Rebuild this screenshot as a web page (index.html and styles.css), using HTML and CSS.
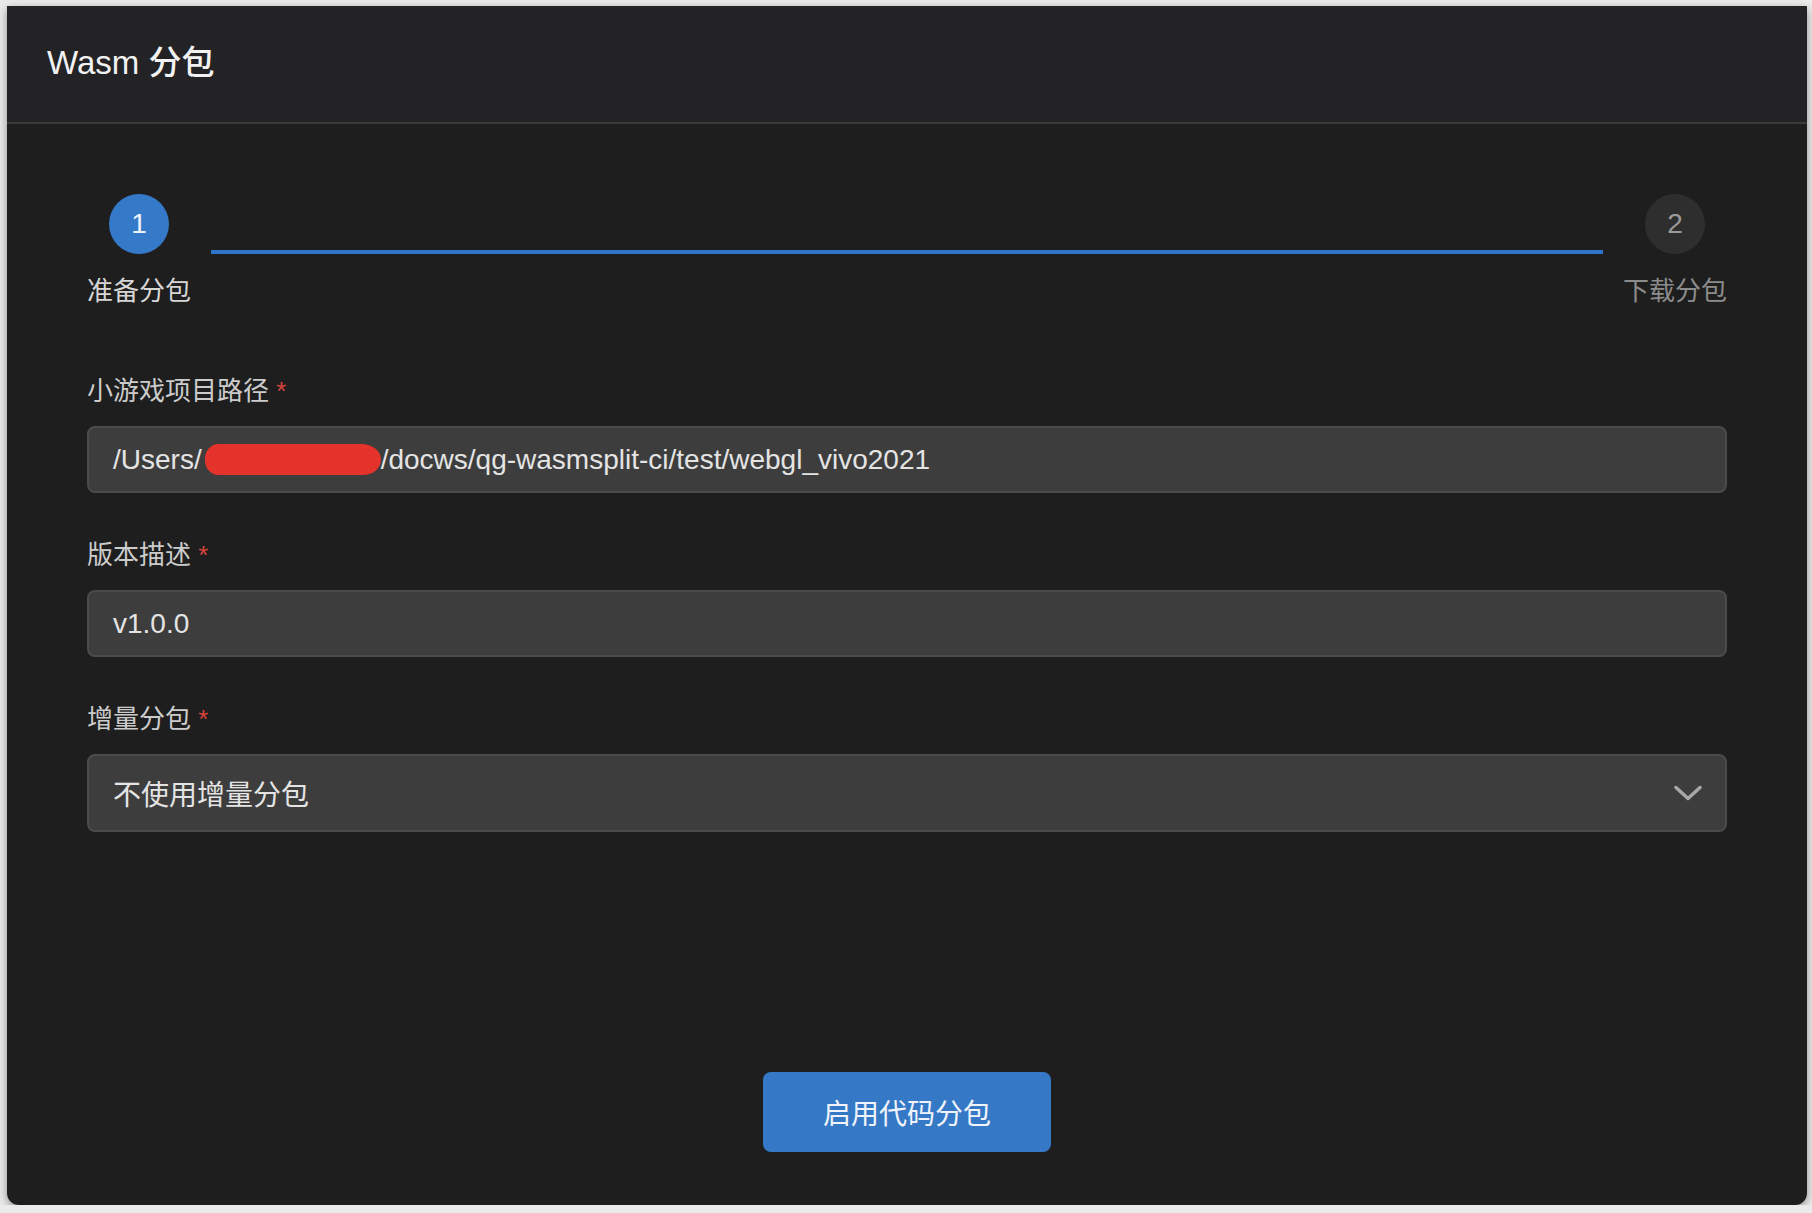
FILE: index.html
```html
<!DOCTYPE html>
<html>
<head>
  <meta charset="utf-8">
  <title>Wasm 分包</title>
  <link rel="stylesheet" href="styles.css">
</head>
<body>
  <div class="window">
    <div class="header">Wasm 分包</div>

    <div class="content">
      <!-- pasos -->
      <div class="steps">
        <div class="step active">
          <div class="step-dot">1</div>
          <div class="step-label">准备分包</div>
        </div>
        <div class="step-line"></div>
        <div class="step">
          <div class="step-dot">2</div>
          <div class="step-label">下载分包</div>
        </div>
      </div>

      <form class="form">
        <div class="field">
          <label>小游戏项目路径 <span class="req">*</span></label>
          <div class="input">/Users/<span class="redact"></span>/docws/qg-wasmsplit-ci/test/webgl_vivo2021</div>
        </div>
        <div class="field">
          <label>版本描述 <span class="req">*</span></label>
          <div class="input">v1.0.0</div>
        </div>
        <div class="field">
          <label>增量分包 <span class="req">*</span></label>
          <div class="select">
            <span>不使用增量分包</span>
            <svg class="chevron" width="28" height="16" viewBox="0 0 28 16">
              <polyline points="2,2.5 14,13.5 26,2.5" fill="none" stroke="#a8a8a8" stroke-width="3.5" stroke-linecap="round" stroke-linejoin="round"/>
            </svg>
          </div>
        </div>
      </form>

      <button type="button" class="btn">启用代码分包</button>
    </div>
  </div>
</body>
</html>
```

FILE: styles.css
```css
body {
  margin: 0;
  background: #ebebeb;
  font-family: "Liberation Sans", "Noto Sans CJK SC", sans-serif;
}
.window {
  margin: 6px 0 0 7px;
  width: 1800px;
  height: 1199px;
  background: #1e1e1e;
  border-radius: 0 0 12px 12px;
  box-shadow: 0 3px 10px rgba(0, 0, 0, 0.4);
  display: flex;
  flex-direction: column;
  overflow: hidden;
}
.header {
  box-sizing: border-box;
  height: 118px;
  flex-shrink: 0;
  display: flex;
  align-items: center;
  padding: 0 0 8px 40px;
  background: #232325;
  border-bottom: 2px solid #3a3a3a;
  color: #f2f2f2;
  font-size: 33px;
  font-weight: 500;
}
.content {
  flex: 1;
  display: flex;
  flex-direction: column;
  padding: 70px 80px 53px;
}
.steps {
  display: flex;
  align-items: flex-start;
}
.step {
  display: flex;
  flex-direction: column;
  align-items: center;
}
.step-dot {
  width: 60px;
  height: 60px;
  border-radius: 50%;
  display: flex;
  align-items: center;
  justify-content: center;
  font-size: 28px;
  background: #2e2e2e;
  color: #9a9a9a;
}
.step-label {
  margin-top: 19px;
  font-size: 26px;
  line-height: 36px;
  color: #8c8c8c;
}
.step.active .step-dot {
  background: #3579c9;
  color: #eef3fa;
}
.step.active .step-label {
  color: #d6d6d6;
}
.step-line {
  flex: 1;
  height: 4px;
  margin: 56px 20px 0;
  background: #2f74c8;
}
.form {
  margin-top: 64px;
}
.field {
  margin-bottom: 44px;
}
.field label {
  display: block;
  margin-bottom: 17px;
  font-size: 26px;
  line-height: 36px;
  color: #cccccc;
}
.req {
  color: #d9433b;
}
.input,
.select {
  box-sizing: border-box;
  display: flex;
  align-items: center;
  padding: 0 23px 0 24px;
  background: #3d3d3d;
  border: 2px solid #4b4b4b;
  border-radius: 8px;
  color: #e4e4e4;
  font-size: 28px;
  white-space: nowrap;
}
.input {
  height: 67px;
}
.select {
  height: 78px;
  justify-content: space-between;
}
.redact {
  display: inline-block;
  width: 176px;
  height: 31px;
  margin-left: 3px;
  border-radius: 14px 20px 18px 14px / 15px 16px 16px 15px;
  background: #e5322a;
}
.btn {
  align-self: center;
  margin-top: auto;
  width: 288px;
  height: 80px;
  border: none;
  border-radius: 8px;
  background: #3579c6;
  color: #f0f4fa;
  font-family: inherit;
  font-size: 28px;
}
```
